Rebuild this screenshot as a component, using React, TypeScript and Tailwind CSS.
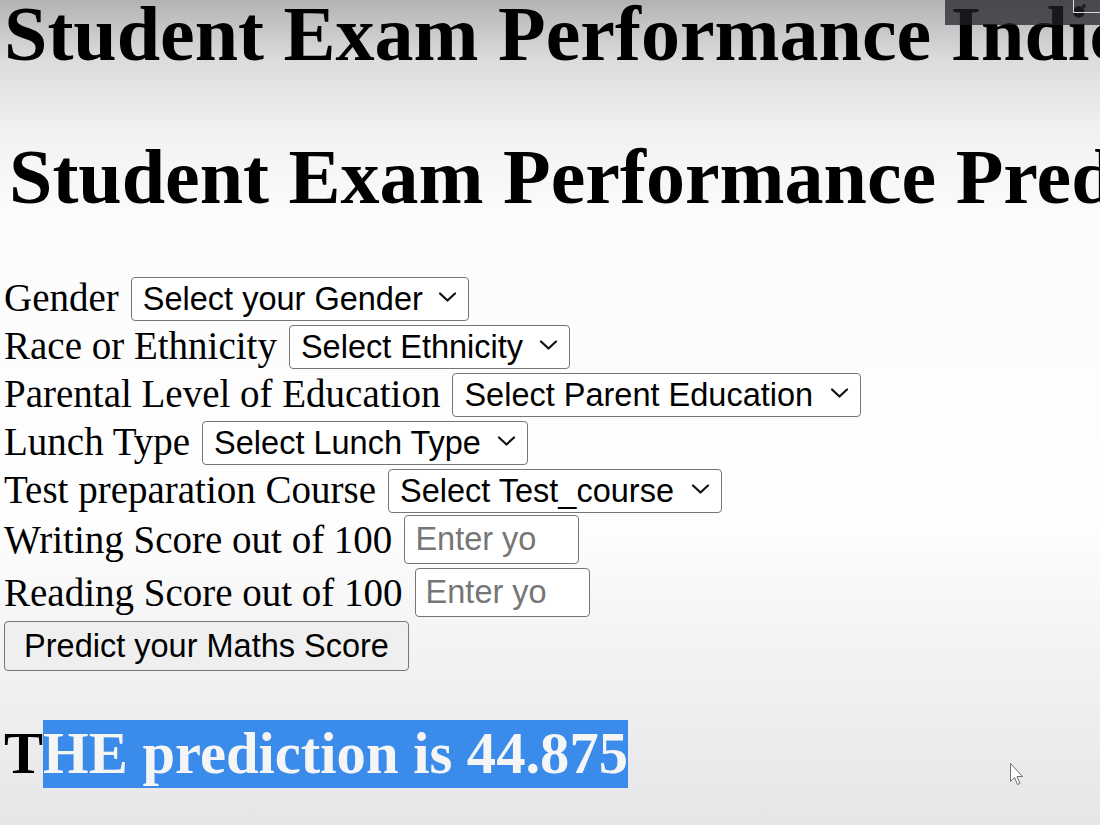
import React from "react"

const selects = [
  { label: "Gender", name: "gender", placeholder: "Select your Gender", width: "w-[338px]" },
  { label: "Race or Ethnicity", name: "ethnicity", placeholder: "Select Ethnicity", width: "w-[281px]" },
  { label: "Parental Level of Education", name: "parental_level_of_education", placeholder: "Select Parent Education", width: "w-[409px]" },
  { label: "Lunch Type", name: "lunch", placeholder: "Select Lunch Type", width: "w-[326px]" },
  { label: "Test preparation Course", name: "test_preparation_course", placeholder: "Select Test_course", width: "w-[334px]" },
]

function Chevron() {
  return (
    <svg
      className="pointer-events-none absolute right-[12px] top-1/2 h-[11px] w-[19px] -translate-y-1/2"
      viewBox="0 0 19 11"
      fill="none"
      stroke="#111"
      strokeWidth="2.2"
      strokeLinecap="round"
      strokeLinejoin="round"
    >
      <path d="M2 2 L9.5 9 L17 2" />
    </svg>
  )
}

export default function App() {
  return (
    <div className="relative h-[825px] w-[1100px] overflow-hidden whitespace-nowrap bg-[linear-gradient(to_bottom,#b3b3b5_0px,#dcdcde_60px,#f1f1f3_130px,#fcfcfc_220px,#fefefe_520px,#f3f3f5_650px,#e6e6e8_825px)] pl-[4px] font-['Liberation_Serif',serif] text-black">
      <h1 className="mt-[-11px] text-[78px] font-bold leading-[90px]">Student Exam Performance Indicator</h1>
      <h1 className="ml-[5px] mt-[53px] text-[78px] font-bold leading-[90px]">Student Exam Performance Prediction</h1>

      {/* Form */}
      <form className="mt-[51px] flex flex-col text-[39px]">
        {selects.map((s) => (
          <div key={s.name} className="flex h-[48px] items-center gap-[12px]">
            <label className="leading-[45px]">{s.label}</label>
            <div className="relative">
              <select
                name={s.name}
                defaultValue=""
                className={`${s.width} h-[44px] appearance-none rounded-[4px] border border-[#767676] bg-white pl-[11px] font-['Liberation_Sans',Arial,sans-serif] text-[32.5px] leading-[40px] text-black`}
              >
                <option value="" disabled>
                  {s.placeholder}
                </option>
              </select>
              <Chevron />
            </div>
          </div>
        ))}
        <div className="flex h-[53px] items-center gap-[12px]">
          <label className="leading-[45px]">Writing Score out of 100</label>
          <input
            type="text"
            placeholder="Enter your Writing score"
            className="h-[49px] w-[175px] rounded-[4px] border border-[#767676] bg-white pl-[10px] pr-[41px] font-['Liberation_Sans',Arial,sans-serif] text-[32.5px] placeholder:text-[#767676]"
          />
        </div>
        <div className="flex h-[53px] items-center gap-[12px]">
          <label className="leading-[45px]">Reading Score out of 100</label>
          <input
            type="text"
            placeholder="Enter your Reading score"
            className="h-[49px] w-[175px] rounded-[4px] border border-[#767676] bg-white pl-[10px] pr-[41px] font-['Liberation_Sans',Arial,sans-serif] text-[32.5px] placeholder:text-[#767676]"
          />
        </div>
        <div className="flex h-[53px] items-center">
          <button
            type="button"
            className="h-[50px] w-[405px] rounded-[4px] border border-[#767676] bg-[#efefef] font-['Liberation_Sans',Arial,sans-serif] text-[32.5px] text-black"
          >
            Predict your Maths Score
          </button>
        </div>
      </form>

      <h2 className="mt-[48px] text-[58.6px] font-bold leading-[68px]">
        T<span className="inline-block bg-[#3b8cea] text-[#f5f5f5]">HE prediction is 44.875</span>
      </h2>

      {/* video overlay in the corner */}
      <div className="absolute left-[945px] top-0 h-[25px] w-[155px] bg-[rgba(33,33,38,0.73)]">
        <div className="absolute left-[128px] top-[-1px] h-[14px] w-[40px] border border-[#d8d8d8]">
          <div className="absolute left-[8px] top-[4px] h-[4px] w-[4px] rounded-full bg-[#222]" />
        </div>
      </div>

      {/* mouse pointer */}
      <svg className="absolute left-[1009px] top-[762px] h-[26px] w-[17px]" viewBox="0 0 17 26">
        <path
          d="M1.5 1.5 L1.5 19.5 L5.5 15.5 L8.5 22.5 L11 21.5 L8 14.5 L13.5 14.5 Z"
          fill="#ffffff"
          stroke="#6f6f6f"
          strokeWidth="1"
          strokeLinejoin="round"
        />
      </svg>
    </div>
  )
}
